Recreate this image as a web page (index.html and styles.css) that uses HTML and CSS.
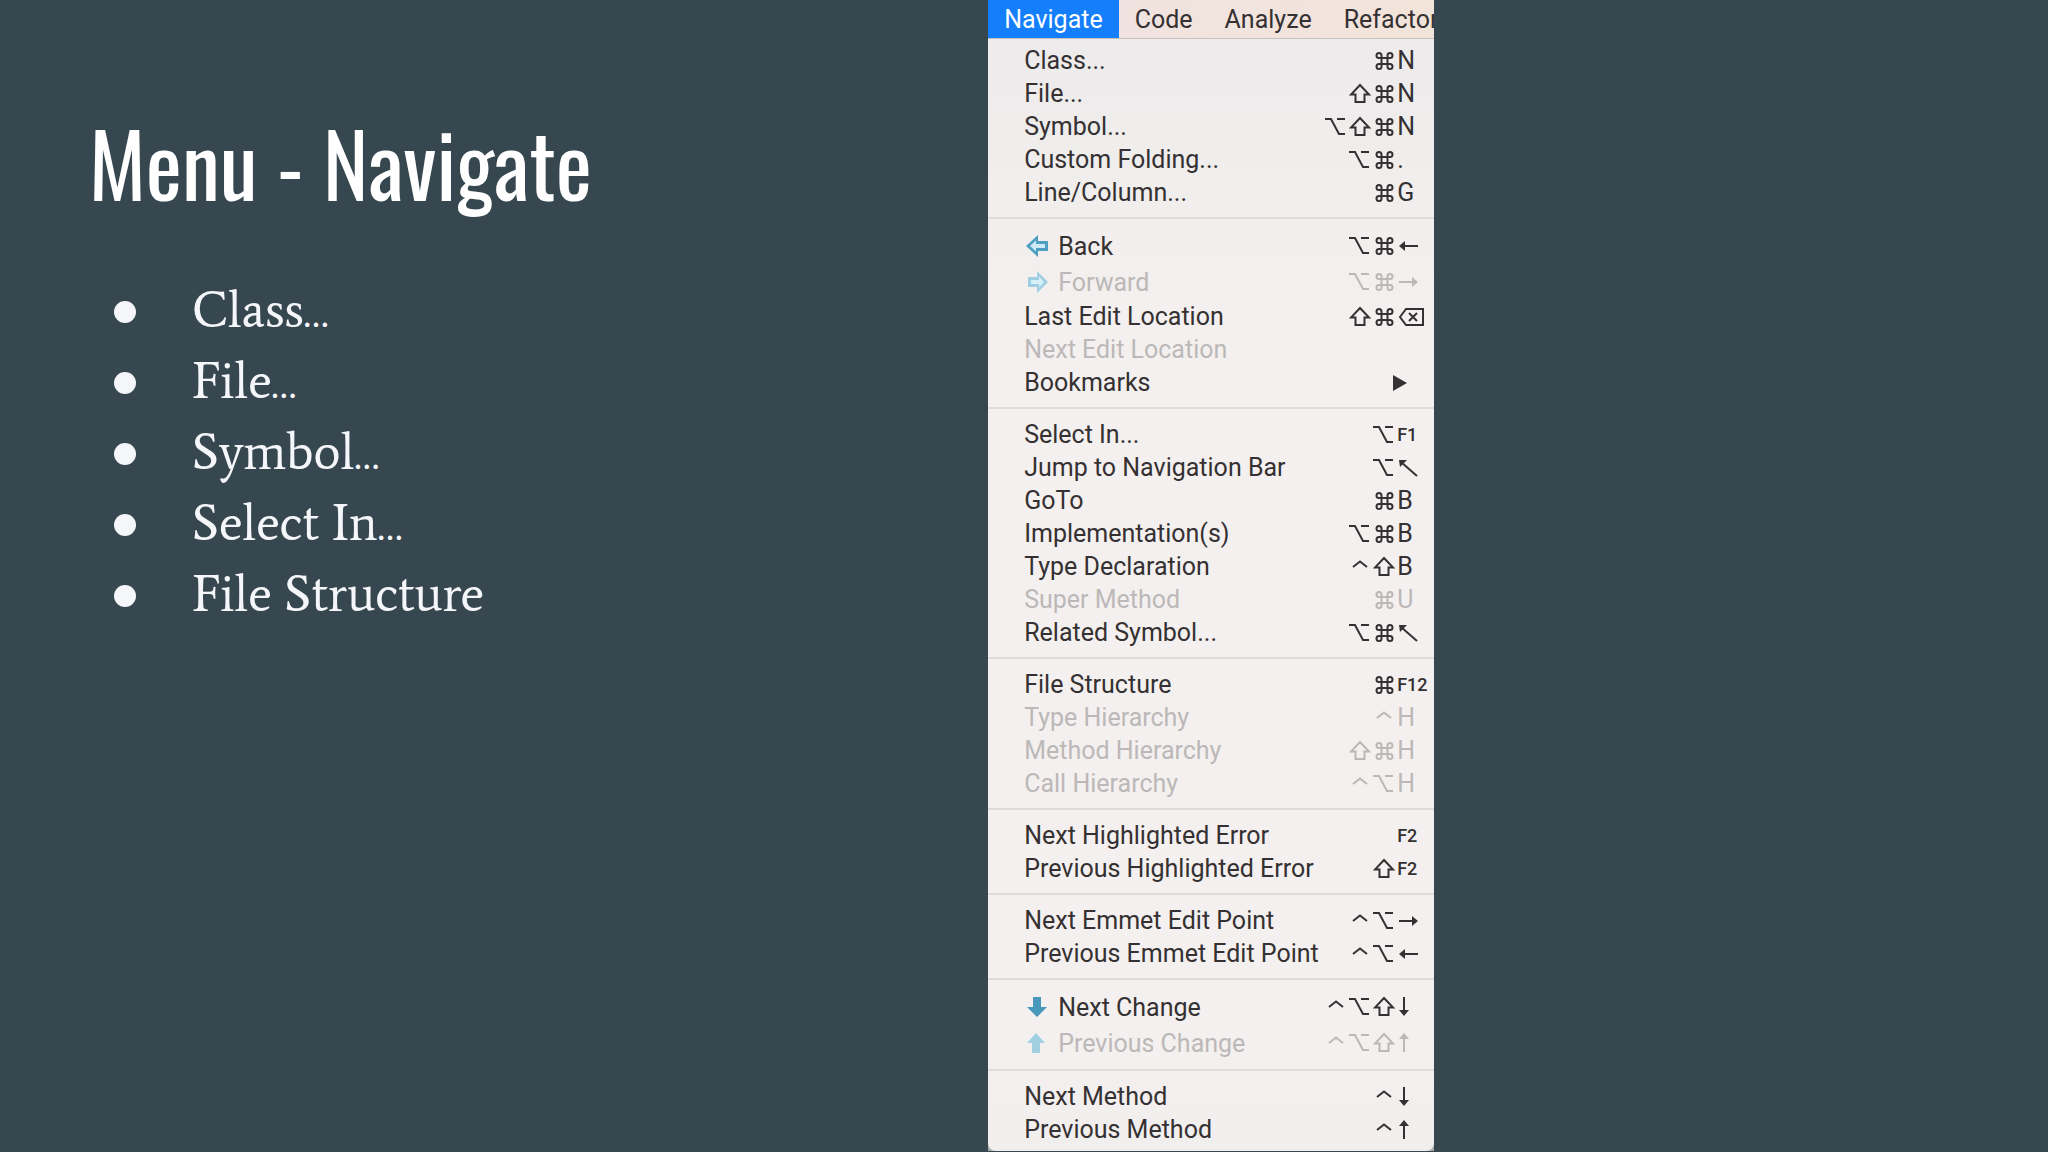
FILE: index.html
```html
<!DOCTYPE html>
<html lang="en">
  <head>
    <meta charset="UTF-8" />
    <meta name="viewport" content="width=device-width, initial-scale=1.0" />
    <title>Menu - Navigate</title>
    <link rel="stylesheet" href="styles.css">
  </head>
  <body>
    <svg class="sprite">
      <symbol id="cmd" viewBox="0 0 24 24"><path d="M17 4a2.500 2.500 0 0 0-2.500 2.500v11a2.500 2.500 0 1 0 2.500-2.500H6a2.500 2.500 0 1 0 2.500 2.500v-11a2.500 2.500 0 1 0-2.500 2.500h11a2.500 2.500 0 0 0 0-5z"/></symbol>
      <symbol id="shift" viewBox="0 0 24 24"><path d="M11 3L20 12.500H15.500V20H6.500V12.500H2Z"/></symbol>
      <symbol id="opt" viewBox="0 0 24 24"><path d="M0 4H6L14 19H20M12 4H20"/></symbol>
      <symbol id="ctrl" viewBox="0 0 24 24"><path d="M4 12L11 6.500L18 12"/></symbol>
      <symbol id="left" viewBox="0 0 24 24"><path d="M5 12H21"/><path class="fill" d="M2 12L8 7V17Z"/></symbol>
      <symbol id="right" viewBox="0 0 24 24"><path d="M2 12H18"/><path class="fill" d="M21 12L15 7V17Z"/></symbol>
      <symbol id="down" viewBox="0 0 24 24"><path d="M7 2V18"/><path class="fill" d="M7 21L2 15H12Z"/></symbol>
      <symbol id="up" viewBox="0 0 24 24"><path d="M7 21V5"/><path class="fill" d="M7 2L2 8H12Z"/></symbol>
      <symbol id="home" viewBox="0 0 24 24"><path d="M4 6L20 20"/><path class="fill" d="M2 4H10L3 11Z"/></symbol>
      <symbol id="delete" viewBox="0 0 28 24"><path d="M3 12L9 4H26V20H9Z"/><path d="M12 8L20 16M20 8L12 16"/></symbol>
    </svg>

    <main class="slide">
      <section class="content">
        <h1>Menu - Navigate</h1>
        <ul class="topics">
          <li>Class<span class="dots">…</span></li>
          <li>File<span class="dots">…</span></li>
          <li>Symbol<span class="dots">…</span></li>
          <li>Select In<span class="dots">…</span></li>
          <li>File Structure</li>
        </ul>
      </section>

      <section class="app-menu">
        <nav class="menubar">
          <button class="active">Navigate</button>
          <button>Code</button>
          <button>Analyze</button>
          <button>Refactor</button>
        </nav>

        <div class="dropdown">
          <div class="group">
            <button class="item">Class... <kbd><svg><use href="#cmd"/></svg><b>N</b></kbd></button>
            <button class="item">File... <kbd><svg><use href="#shift"/></svg><svg><use href="#cmd"/></svg><b>N</b></kbd></button>
            <button class="item">Symbol... <kbd><svg><use href="#opt"/></svg><svg><use href="#shift"/></svg><svg><use href="#cmd"/></svg><b>N</b></kbd></button>
            <button class="item">Custom Folding... <kbd><svg><use href="#opt"/></svg><svg><use href="#cmd"/></svg><b>.</b></kbd></button>
            <button class="item">Line/Column... <kbd><svg><use href="#cmd"/></svg><b>G</b></kbd></button>
          </div>

          <div class="group">
            <button class="item with-icon">
              <svg class="icon" viewBox="0 0 24 24"><path d="M2 12L14 1V7H24V17H14V23Z" fill="#4f9fc2"/><path d="M6 12L12 6.500V10H21V14H12V17.500Z" fill="#cdebf6"/></svg>
              Back <kbd><svg><use href="#opt"/></svg><svg><use href="#cmd"/></svg><b><svg><use href="#left"/></svg></b></kbd>
            </button>
            <button class="item with-icon" disabled>
              <svg class="icon" viewBox="0 0 24 24"><path d="M24 12L13 1V7H4V17H13V23Z" fill="#9fcfe0"/><path d="M20 12L15 6.500V10H7V14H15V17.500Z" fill="#d8f0f8"/></svg>
              Forward <kbd><svg><use href="#opt"/></svg><svg><use href="#cmd"/></svg><b><svg><use href="#right"/></svg></b></kbd>
            </button>
            <button class="item">Last Edit Location <kbd><svg><use href="#shift"/></svg><svg><use href="#cmd"/></svg><b><svg class="wide"><use href="#delete"/></svg></b></kbd></button>
            <button class="item" disabled>Next Edit Location</button>
            <button class="item">Bookmarks
              <svg class="submenu" viewBox="0 0 16 18"><path d="M1 1L15 9L1 17Z"/></svg>
            </button>
          </div>

          <div class="group">
            <button class="item">Select In... <kbd><svg><use href="#opt"/></svg><b class="fn">F1</b></kbd></button>
            <button class="item">Jump to Navigation Bar <kbd><svg><use href="#opt"/></svg><b><svg><use href="#home"/></svg></b></kbd></button>
            <button class="item">GoTo <kbd><svg><use href="#cmd"/></svg><b>B</b></kbd></button>
            <button class="item">Implementation(s) <kbd><svg><use href="#opt"/></svg><svg><use href="#cmd"/></svg><b>B</b></kbd></button>
            <button class="item">Type Declaration <kbd><svg><use href="#ctrl"/></svg><svg><use href="#shift"/></svg><b>B</b></kbd></button>
            <button class="item" disabled>Super Method <kbd><svg><use href="#cmd"/></svg><b>U</b></kbd></button>
            <button class="item">Related Symbol... <kbd><svg><use href="#opt"/></svg><svg><use href="#cmd"/></svg><b><svg><use href="#home"/></svg></b></kbd></button>
          </div>

          <div class="group">
            <button class="item">File Structure <kbd><svg><use href="#cmd"/></svg><b class="fn">F12</b></kbd></button>
            <button class="item" disabled>Type Hierarchy <kbd><svg><use href="#ctrl"/></svg><b>H</b></kbd></button>
            <button class="item" disabled>Method Hierarchy <kbd><svg><use href="#shift"/></svg><svg><use href="#cmd"/></svg><b>H</b></kbd></button>
            <button class="item" disabled>Call Hierarchy <kbd><svg><use href="#ctrl"/></svg><svg><use href="#opt"/></svg><b>H</b></kbd></button>
          </div>

          <div class="group">
            <button class="item">Next Highlighted Error <kbd><b class="fn">F2</b></kbd></button>
            <button class="item">Previous Highlighted Error <kbd><svg><use href="#shift"/></svg><b class="fn">F2</b></kbd></button>
          </div>

          <div class="group">
            <button class="item">Next Emmet Edit Point <kbd><svg><use href="#ctrl"/></svg><svg><use href="#opt"/></svg><b><svg><use href="#right"/></svg></b></kbd></button>
            <button class="item">Previous Emmet Edit Point <kbd><svg><use href="#ctrl"/></svg><svg><use href="#opt"/></svg><b><svg><use href="#left"/></svg></b></kbd></button>
          </div>

          <div class="group">
            <button class="item with-icon">
              <svg class="icon" viewBox="0 0 24 24"><path d="M9 2H17V12H23L13 22L3 12H9Z" fill="#4898bb"/></svg>
              Next Change <kbd><svg><use href="#ctrl"/></svg><svg><use href="#opt"/></svg><svg><use href="#shift"/></svg><b><svg><use href="#down"/></svg></b></kbd>
            </button>
            <button class="item with-icon" disabled>
              <svg class="icon" viewBox="0 0 24 24"><path d="M8 22H16V12H21L12 2L3 12H8Z" fill="#9fcfe0"/></svg>
              Previous Change <kbd><svg><use href="#ctrl"/></svg><svg><use href="#opt"/></svg><svg><use href="#shift"/></svg><b><svg><use href="#up"/></svg></b></kbd>
            </button>
          </div>

          <div class="group">
            <button class="item">Next Method <kbd><svg><use href="#ctrl"/></svg><b><svg><use href="#down"/></svg></b></kbd></button>
            <button class="item">Previous Method <kbd><svg><use href="#ctrl"/></svg><b><svg><use href="#up"/></svg></b></kbd></button>
          </div>
        </div>
      </section>
    </main>
  </body>
</html>
```
FILE: styles.css
```css
* {
  box-sizing: border-box;
  margin: 0;
  padding: 0;
}

body {
  background: #37474f;
  color: white;
}

.sprite {
  display: none;
}

.slide {
  display: flex;
  align-items: flex-start;
  min-height: 100vh;
  overflow: hidden;
}

.content {
  width: 48.25%;
  padding: 102px 40px 0 89px;
}

h1 {
  font-family: "Oswald", "Liberation Sans Narrow", sans-serif;
  font-size: 86px;
  font-weight: normal;
  line-height: 120px;
}

.topics {
  list-style: none;
  padding: 52px 0 0 25px;
  font-family: "Average", "Liberation Serif", serif;
  font-size: 51px;
  line-height: 71px;
  color: #f5f6fa;
}

.topics li::before {
  content: "";
  display: inline-block;
  width: 22px;
  height: 22px;
  margin-right: 56px;
  margin-bottom: 4px;
  border-radius: 50%;
  background: #f5f6fa;
}

.dots {
  font-size: 42px;
  line-height: 1;
}

/* app menu */
.app-menu {
  width: 446px;
  font-family: "Roboto", sans-serif;
  font-size: 25px;
  color: #353132;
  background: #a9adae;
}

.app-menu button {
  font: inherit;
  color: inherit;
  border: none;
  background: none;
  white-space: nowrap;
}

.menubar {
  display: flex;
  height: 39px;
  overflow: hidden;
  background: linear-gradient(90deg, #efe3e2, #f3e4da);
  border-bottom: 1px solid #c9bfba;
}

.menubar button {
  padding: 0 16px;
}

.menubar .active {
  color: white;
  background: #147efb;
}

.dropdown {
  background: linear-gradient(#edebeb, #f4f0ef 25%, #f4f0ef 90%, #f1eeee);
  border-radius: 0 0 8px 8px;
}

.group {
  padding: 9px 0 8px;
  border-bottom: 2px solid #dfdbda;
}

.group:first-child {
  padding-top: 5px;
}

.group:last-child {
  padding-bottom: 5px;
  border-bottom: none;
}

.app-menu .item {
  display: flex;
  align-items: center;
  width: 100%;
  height: 33px;
  padding-left: 36px;
  text-align: left;
}

.app-menu .with-icon {
  height: 36px;
}

.app-menu .item:disabled {
  color: #bcb8b8;
}

.icon {
  width: 24px;
  height: 24px;
  margin-right: 10px;
}

.submenu {
  width: 16px;
  height: 18px;
  margin-left: auto;
  margin-right: 26px;
  fill: currentColor;
}

/* shortcut keys */
kbd {
  display: flex;
  align-items: center;
  margin-left: auto;
  font-family: inherit;
}

kbd svg {
  display: block;
  width: 24px;
  height: 24px;
  fill: none;
  stroke: currentColor;
  stroke-width: 2px;
}

kbd .wide {
  width: 28px;
}

kbd b {
  width: 37px;
  font-weight: normal;
}

kbd .fn {
  font-size: 18px;
  font-weight: 500;
}

.fill {
  fill: currentColor;
  stroke: none;
}
```
